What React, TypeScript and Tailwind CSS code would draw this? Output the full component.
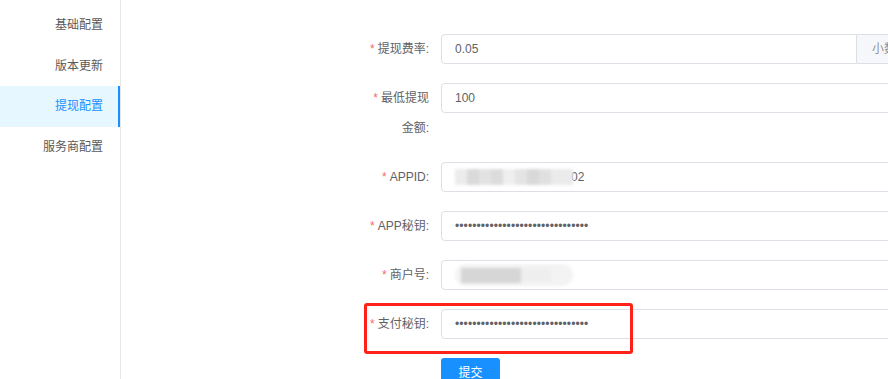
import React from 'react';

const menu = ['基础配置', '版本更新', '提现配置', '服务商配置'];
const dots = '•'.repeat(31);

function Label({ children }: { children: React.ReactNode }) {
    return (
        <div className="w-[82px] shrink-0 whitespace-nowrap pr-[12px] text-right text-[12px] leading-[30px] text-[#606266]">
            <span className="mr-[3px] text-[#f56c6c]">*</span>
            {children}
        </div>
    );
}

function Row({ label, children }: { label: React.ReactNode; children: React.ReactNode }) {
    return (
        <div className="mb-[19px] flex items-start">
            <Label>{label}</Label>
            {children}
        </div>
    );
}

function Box({ children }: { children?: React.ReactNode }) {
    return (
        <div className="relative flex h-[30px] w-[470px] shrink-0 items-center rounded-[4px] border border-[#dcdfe6] bg-white pl-[13px] text-[12px] text-[#606266]">
            {children}
        </div>
    );
}

export default function App() {
    return (
        <div
            className="relative flex h-[379px] w-full overflow-hidden bg-white"
            style={{ fontFamily: '"Liberation Sans", "Noto Sans CJK SC", sans-serif' }}
        >
            <aside className="w-[121px] shrink-0 border-r border-[#e6e6e6] pt-[5px]">
                {menu.map((m) => {
                    const active = m === '提现配置';
                    return (
                        <div
                            key={m}
                            className={`h-[40.5px] border-r-2 pr-[15px] text-right text-[12px] leading-[40px] ${
                                active
                                    ? 'border-[#1890ff] bg-[#e6f7ff] text-[#1890ff]'
                                    : 'border-transparent text-[#595959]'
                            }`}
                        >
                            {m}
                        </div>
                    );
                })}
            </aside>

            <main className="min-w-0 flex-1 pl-[238px] pt-[34px]">
                <Row label="提现费率:">
                    <div className="flex h-[30px] w-[500px] shrink-0 text-[12px]">
                        <div className="flex w-[416px] items-center rounded-l-[4px] border border-[#dcdfe6] pl-[13px] text-[#606266]">
                            0.05
                        </div>
                        <div className="flex flex-1 items-center whitespace-nowrap rounded-r-[4px] border border-l-0 border-[#dcdfe6] bg-[#f5f7fa] pl-[15px] text-[#909399]">
                            小数点
                        </div>
                    </div>
                </Row>

                <Row
                    label={
                        <>
                            最低提现
                            <br />
                            金额:
                        </>
                    }
                >
                    <Box>100</Box>
                </Row>

                <Row label="APPID:">
                    <Box>
                        <div className="flex h-[24px] w-[118px] items-center blur-[1.5px]">
                            <div className="h-[16px] w-[12px] bg-[#ececec]" />
                            <div className="h-[16px] w-[12px] bg-[#dadada]" />
                            <div className="h-[16px] w-[12px] bg-[#e2e2e2]" />
                            <div className="h-[16px] w-[12px] bg-[#dcdcdc]" />
                            <div className="h-[16px] w-[12px] bg-[#efefef]" />
                            <div className="h-[16px] w-[12px] bg-[#e4e4e4]" />
                            <div className="h-[16px] w-[12px] bg-[#d9d9d9]" />
                            <div className="h-[16px] w-[12px] bg-[#e0e0e0]" />
                            <div className="h-[16px] w-[22px] bg-[#ebebeb]" />
                        </div>
                        <span className="-ml-[2px]">02</span>
                    </Box>
                </Row>

                <Row label="APP秘钥:">
                    <Box>
                        <span className="tracking-[0.1px]">{dots}</span>
                    </Box>
                </Row>

                <Row label="商户号:">
                    <Box>
                        <div className="flex h-[22px] w-[118px] items-center rounded-full bg-[#f3f3f3] blur-[1.5px]">
                            <div className="ml-[6px] h-[15px] w-[60px] bg-[#d6d6d6]" />
                            <div className="h-[12px] w-[30px] bg-[#eeeeee]" />
                        </div>
                    </Box>
                </Row>

                <Row label="支付秘钥:">
                    <Box>
                        <span className="tracking-[0.1px]">{dots}</span>
                    </Box>
                </Row>

                <div className="mt-[1px] flex">
                    <div className="w-[82px] shrink-0" />
                    <button className="h-[30px] w-[59px] rounded-[3px] bg-[#1890ff] text-[12px] text-white">提交</button>
                </div>
            </main>

            <div className="pointer-events-none absolute left-[364px] top-[303px] h-[51px] w-[269px] rounded-[3px] border-[3px] border-[#ff2219]" />
        </div>
    );
}
